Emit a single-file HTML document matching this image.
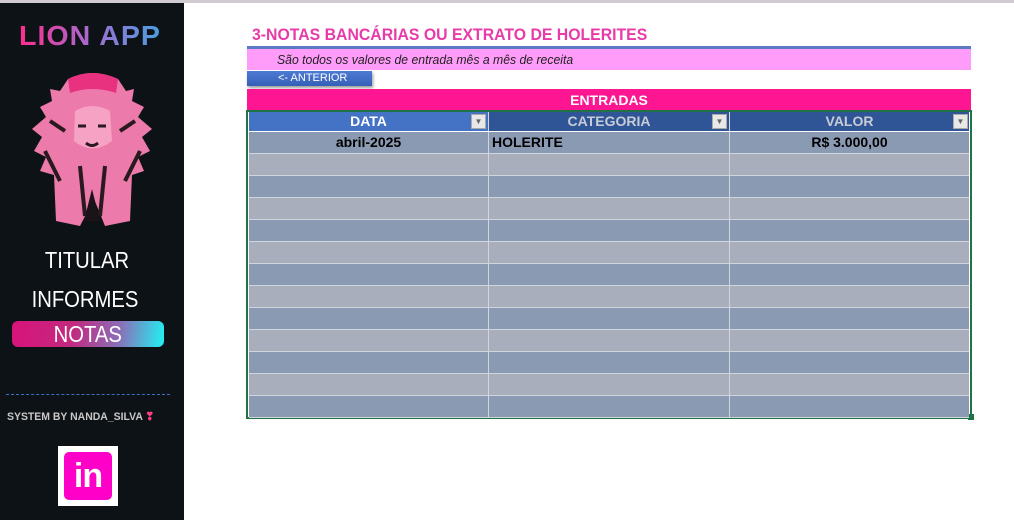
<!DOCTYPE html>
<html><head><meta charset="utf-8"><style>
*{margin:0;padding:0;box-sizing:border-box}
body{width:1014px;height:520px;overflow:hidden;background:#fff;font-family:"Liberation Sans",sans-serif;position:relative}
.top{position:absolute;left:0;top:0;width:1014px;height:3px;background:#cfcbd0}
.side{position:absolute;left:0;top:3px;width:184px;height:517px;background:#0d1216}
.abs{position:absolute}
.nav{color:#fff;font-size:23px;text-align:center;width:184px;left:-5px;transform:scaleX(0.88)}
.row{position:absolute;left:249px;width:720px;height:22px;display:flex;border-bottom:1px solid #d2d5db}
.row div{height:21px;border-right:1px solid #d2d5db;font-weight:bold;font-size:14px;line-height:21px;color:#000}
.row span.t{display:inline-block;transform:scaleX(0.92)}
</style></head><body>
<div class="top"></div>
<div class="side">
 <div class="abs" style="left:19px;top:17px;font-size:28px;font-weight:900;letter-spacing:1px;background:linear-gradient(90deg,#ff2d8e,#a56bd0,#4a9ee0);-webkit-background-clip:text;color:transparent;transform:scaleX(1.02);transform-origin:left">LION APP</div>
 <svg class="abs" style="left:30px;top:68px" width="125" height="160" viewBox="0 0 125 160">
  <path d="M38 8 Q62 -4 88 8 L96 20 L104 18 L102 30 L114 36 L108 46 L122 58 L112 66 L120 80 L108 86 L114 100 L102 104 L100 150 L75 155 L64 128 L50 155 L26 150 L24 104 L10 100 L16 86 L4 80 L12 66 L2 58 L16 46 L10 36 L22 30 L20 18 L30 20 Z" fill="#ec7aab"/>
  <path d="M38 8 Q62 -4 88 8 L86 22 Q62 14 40 22 Z" fill="#e8317f"/>
  <path d="M45 40 Q62 30 80 40 L82 70 Q62 85 44 70 Z" fill="#f6a2c4"/>
  <path d="M48 55 h8 M68 55 h8 M56 72 q6 5 12 0" stroke="#2a1a20" stroke-width="3" fill="none"/>
  <path d="M50 95 L55 145 M75 95 L70 145 M15 80 L30 110 M110 80 L95 110 M20 50 L35 60 M105 50 L90 60" stroke="#2a1a20" stroke-width="4" fill="none"/>
  <path d="M62 118 L54 150 L70 150 Z" fill="#1a1418"/>
 </svg>
 <div class="abs nav" style="top:244px">TITULAR</div>
 <div class="abs nav" style="top:283px;left:-7px">INFORMES</div>
 <div class="abs" style="left:12px;top:318px;width:152px;height:26px;border-radius:6px;background:linear-gradient(100deg,#d9137a 0%,#c2297f 40%,#8a6fb8 70%,#1ff4f4 100%);color:#fff;font-size:23px;text-align:center;line-height:27px"><span style="display:inline-block;transform:scaleX(0.88)">NOTAS</span></div>
 <div class="abs" style="left:6px;top:391px;width:164px;border-top:1px dashed #3d70c0"></div>
 <div class="abs" style="left:7px;top:407px;color:#c8c8c8;font-size:11px;font-weight:bold;transform:scaleX(0.95);transform-origin:left;white-space:nowrap">SYSTEM BY NANDA_SILVA <span style="color:#ff3e8a">❣</span></div>
 <div class="abs" style="left:58px;top:443px;width:60px;height:60px;background:#fff">
  <div class="abs" style="left:6px;top:6px;width:48px;height:48px;background:#ff00c8;border-radius:5px;color:#fff;font-weight:bold;font-size:34px;line-height:48px;text-align:center;letter-spacing:-1px">in</div>
 </div>
</div>
<div class="abs" style="left:252px;top:25px;color:#e83aa8;font-size:17px;font-weight:bold;transform:scaleX(0.93);transform-origin:left;white-space:nowrap">3-NOTAS BANCÁRIAS OU EXTRATO DE HOLERITES</div>
<div class="abs" style="left:247px;top:46px;width:724px;height:3px;background:#5b7ac4"></div>
<div class="abs" style="left:247px;top:49px;width:724px;height:21px;background:#ff9cfa"></div>
<div class="abs" style="left:277px;top:49px;font-style:italic;font-size:13px;line-height:21px;color:#222;transform:scaleX(0.94);transform-origin:left;white-space:nowrap">São todos os valores de entrada mês a mês de receita</div>
<div class="abs" style="left:247px;top:71px;width:125px;height:15px;background:linear-gradient(#4e7bd4,#3560b8);color:#fff;font-size:11px;line-height:15px;padding-left:31px;box-shadow:1px 2px 3px rgba(0,0,0,.4)">&lt;- ANTERIOR</div>
<div class="abs" style="left:247px;top:89px;width:724px;height:21px;background:#fe1592;color:#fff;font-weight:bold;font-size:14px;text-align:center;line-height:22px">ENTRADAS</div>
<div class="abs" style="left:246px;top:110px;width:726px;height:309px;border:2px solid #217346"></div>
<div class="abs" style="left:968px;top:414px;width:6px;height:6px;background:#217346"></div>
<div class="row" style="top:112px;height:20px;border:none">
 <div style="width:240px;background:#4472c4;color:#fff;text-align:center;position:relative;height:19px;line-height:19px">DATA<span style="position:absolute;right:2px;top:2px;width:15px;height:15px;background:#e8e8e8;border:1px solid #aaa;font-size:8px;line-height:14px;color:#666">▼</span></div>
 <div style="width:241px;background:#2f5597;color:#c8ccd6;text-align:center;position:relative;height:19px;line-height:19px">CATEGORIA<span style="position:absolute;right:2px;top:2px;width:15px;height:15px;background:#e8e8e8;border:1px solid #aaa;font-size:8px;line-height:14px;color:#666">▼</span></div>
 <div style="width:239px;background:#2f5597;color:#c8ccd6;text-align:center;position:relative;height:19px;line-height:19px;border:none">VALOR<span style="position:absolute;right:1px;top:2px;width:15px;height:15px;background:#e8e8e8;border:1px solid #aaa;font-size:8px;line-height:14px;color:#666">▼</span></div>
</div>
<div id="rows"></div>
<script>
var h='';for(var i=0;i<13;i++){var c=i%2?'#a8aebb':'#8a9ab3';var t=132+i*22;
h+='<div class="row" style="top:'+t+'px;background:'+c+'"><div style="width:240px;text-align:center">'+(i==0?'abril-2025':'')+'</div><div style="width:241px;padding-left:3px">'+(i==0?'HOLERITE':'')+'</div><div style="width:239px;text-align:center;border:none">'+(i==0?'R$ 3.000,00':'')+'</div></div>';}
document.getElementById('rows').innerHTML=h;
</script>
</body></html>
